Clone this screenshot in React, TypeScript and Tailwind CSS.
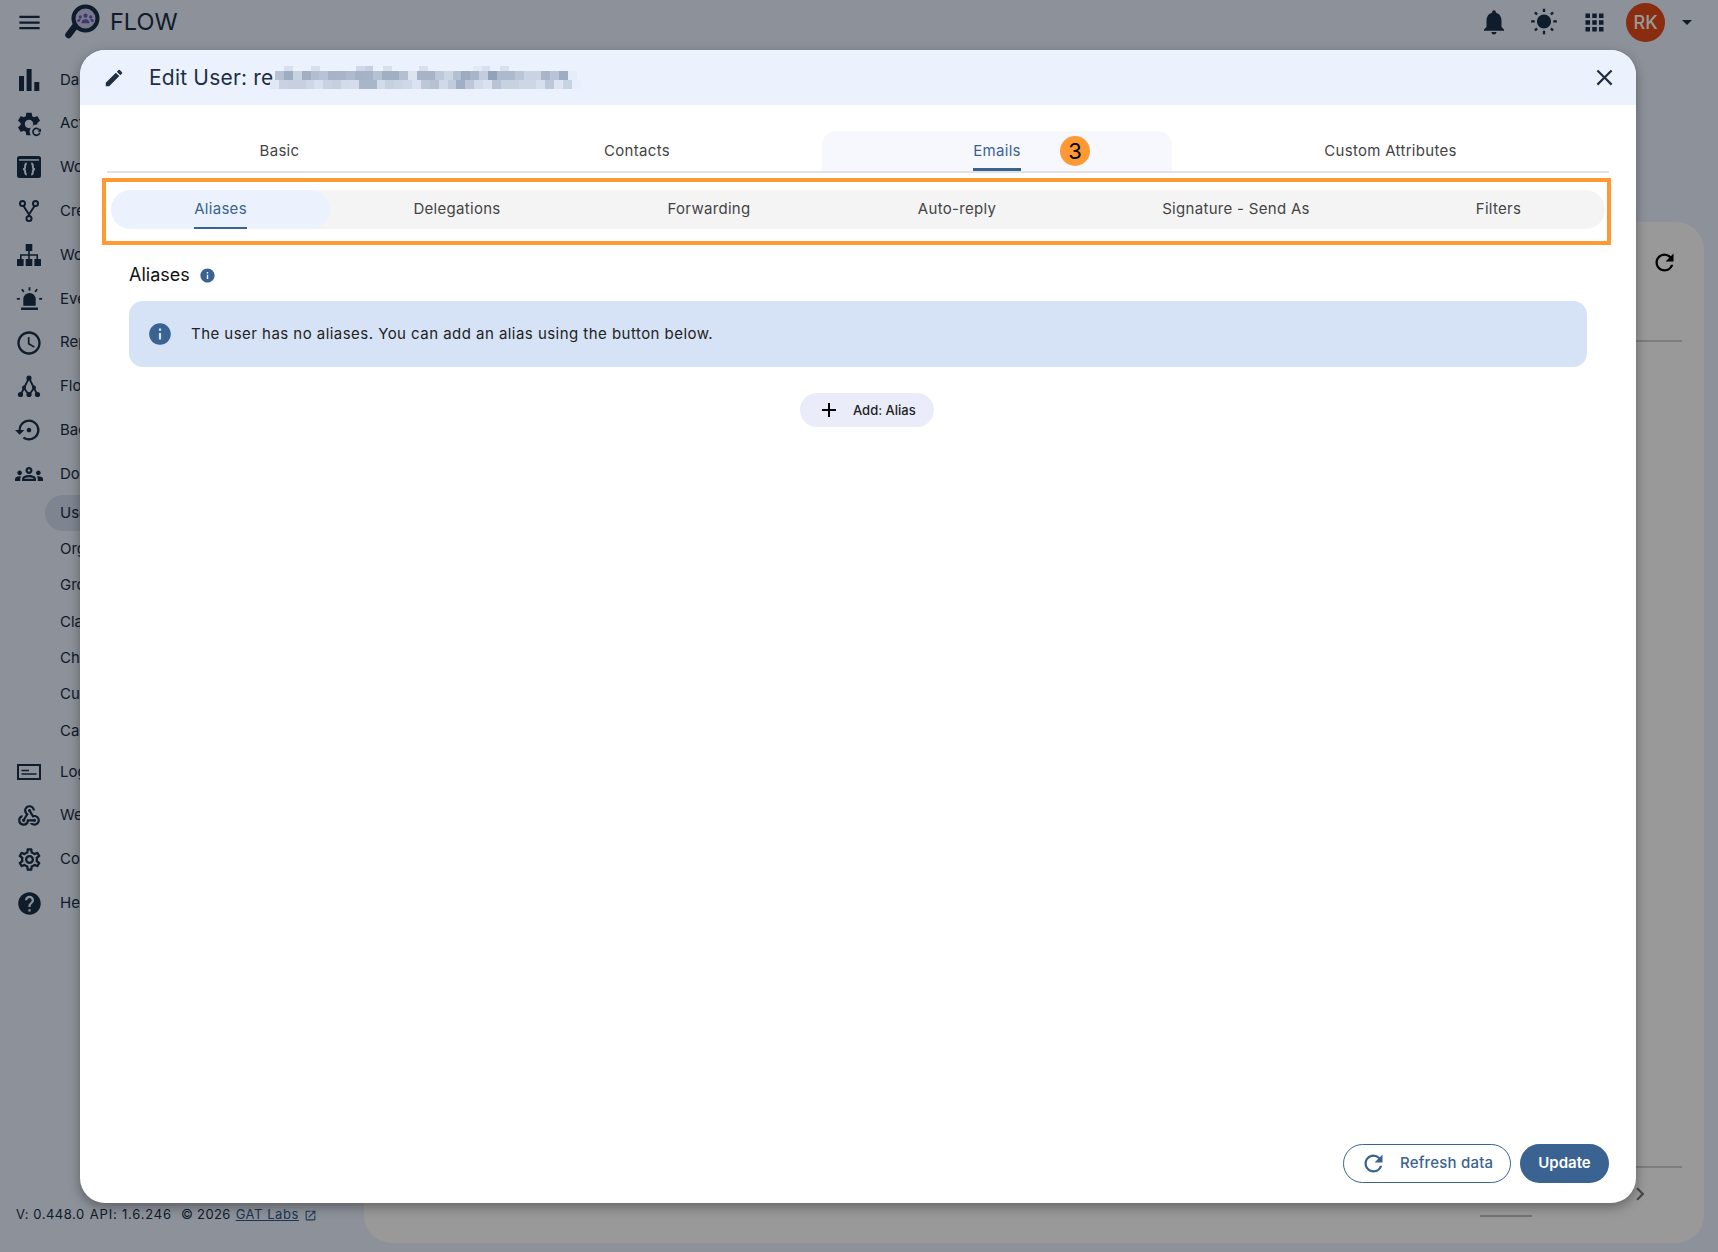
import React from 'react';
import {
  MdAdd,
  MdApps,
  MdArrowDropDown,
  MdChevronRight,
  MdClose,
  MdEdit,
  MdHelp,
  MdInfo,
  MdMenu,
  MdNotifications,
  MdOpenInNew,
  MdOutlineGroups,
  MdOutlineSchedule,
  MdOutlineSettings,
  MdOutlineWebhook,
  MdRefresh,
  MdSettingsBackupRestore,
  MdWbSunny,
} from 'react-icons/md';

// ─── Drawn icons (no close match in the icon packs) ───────────────────────────

const BarsIcon = () => (
  <svg width="24" height="24" viewBox="0 0 24 24" fill="currentColor">
    <rect x="2" y="8" width="5" height="15" />
    <rect x="9.6" y="1" width="5" height="22" />
    <rect x="17.3" y="14" width="5" height="9" />
  </svg>
);

const GEAR =
  'M19.14 12.94c.04-.3.06-.61.06-.94 0-.32-.02-.64-.07-.94l2.03-1.58c.18-.14.23-.41.12-.61l-1.92-3.32c-.12-.22-.37-.29-.59-.22l-2.39.96c-.5-.38-1.03-.7-1.62-.94l-.36-2.54c-.04-.24-.24-.41-.48-.41h-3.84c-.24 0-.43.17-.47.41l-.36 2.54c-.59.24-1.13.57-1.62.94l-2.39-.96c-.22-.08-.47 0-.59.22L2.74 8.87c-.12.21-.08.47.12.61l2.03 1.58c-.05.3-.09.63-.09.94s.02.64.07.94l-2.03 1.58c-.18.14-.23.41-.12.61l1.92 3.32c.12.22.37.29.59.22l2.39-.96c.5.38 1.03.7 1.62.94l.36 2.54c.05.24.24.41.48.41h3.84c.24 0 .44-.17.47-.41l.36-2.54c.59-.24 1.13-.56 1.62-.94l2.39.96c.22.08.47 0 .59-.22l1.92-3.32c.12-.22.07-.47-.12-.61l-2.01-1.58zM12 15.6c-1.98 0-3.6-1.62-3.6-3.6s1.62-3.6 3.6-3.6 3.6 1.62 3.6 3.6-1.62 3.6-3.6 3.6z';

const GearRefreshIcon = () => (
  <svg width="28" height="28" viewBox="0 0 24 24" fill="currentColor">
    <path d={GEAR} />
    <circle cx="18.5" cy="18.5" r="6" fill="#ebf2ff" />
    <path d="M21.2 17.7a3 3 0 1 0 .1 1.7" fill="none" stroke="currentColor" strokeWidth="1.4" />
    <path d="M22.3 15.8v2.8h-2.8z" />
  </svg>
);

const WindowCodeIcon = () => (
  <svg width="24" height="24" viewBox="0 0 24 24">
    <rect x="0" y="1" width="24" height="22" rx="2.5" fill="currentColor" />
    <rect x="2" y="4.2" width="20" height="1.5" fill="#ebf2ff" />
    <path
      d="M9.8 8.5C7.5 8.5 8.3 12 8 13c-.2.8-1 1-1.8 1.2.8.2 1.6.4 1.8 1.2.3 1-.5 4.1 1.8 4.1M14.2 8.5c2.3 0 1.5 3.5 1.8 4.5.2.8 1 1 1.8 1.2-.8.2-1.6.4-1.8 1.2-.3 1 .5 4.1-1.8 4.1"
      fill="none"
      stroke="#ebf2ff"
      strokeWidth="2"
    />
  </svg>
);

const ForkIcon = () => (
  <svg width="24" height="24" viewBox="0 0 24 24" fill="none" stroke="currentColor" strokeWidth="2">
    <circle cx="5.5" cy="4.5" r="2.5" />
    <circle cx="18.5" cy="4.5" r="2.5" />
    <circle cx="12" cy="19.5" r="2.5" />
    <path d="M6.5 7 12 15.5M17.5 7 12 15.5V17" />
  </svg>
);

const SitemapIcon = () => (
  <svg width="24" height="24" viewBox="0 0 24 24" fill="currentColor">
    <rect x="8.7" y="1" width="6.6" height="7" rx="0.5" />
    <rect x="0" y="16" width="6.6" height="7" rx="0.5" />
    <rect x="8.7" y="16" width="6.6" height="7" rx="0.5" />
    <rect x="17.4" y="16" width="6.6" height="7" rx="0.5" />
    <path d="M11.2 8h1.6v3.2H21V16h-1.6v-3.2h-6.6V16h-1.6v-3.2H4.6V16H3v-4.8h8.2z" />
  </svg>
);

const SirenIcon = () => (
  <svg width="27" height="27" viewBox="0 0 24 24" fill="currentColor">
    <path d="M6.5 18.5v-6a5.5 5.5 0 0 1 11 0v6z" />
    <rect x="4.5" y="20" width="15" height="2.2" />
    <rect x="11.2" y="2" width="1.6" height="3" />
    <path d="m4.6 4.3 1.2-1 1.8 2.3-1.2 1zM19.4 4.3l-1.2-1-1.8 2.3 1.2 1z" />
    <rect x="0.8" y="11.5" width="2.6" height="1.6" />
    <rect x="20.6" y="11.5" width="2.6" height="1.6" />
  </svg>
);

const FlowIcon = () => (
  <svg width="24" height="24" viewBox="0 0 24 24" fill="currentColor">
    <path
      d="M12 4 7 14 3.5 21M12 4l5 10 3.5 7M7 14l5 7M17 14l-5 7"
      fill="none"
      stroke="currentColor"
      strokeWidth="1.8"
    />
    <circle cx="12" cy="4" r="2.6" />
    <circle cx="7" cy="13.5" r="2" />
    <circle cx="17" cy="13.5" r="2" />
    <circle cx="3.5" cy="20.5" r="2.6" />
    <circle cx="12" cy="20.5" r="2.6" />
    <circle cx="20.5" cy="20.5" r="2.6" />
  </svg>
);

const LogsIcon = () => (
  <svg width="24" height="24" viewBox="0 0 24 24" fill="none" stroke="currentColor" strokeWidth="2">
    <rect x="1" y="5" width="22" height="14" />
    <path d="M4.5 10.5H12M4.5 14h15" strokeWidth="1.6" />
  </svg>
);

const FlowLogo = () => (
  <svg width="40" height="44" viewBox="0 0 40 44">
    <path d="M13.5 27 7.5 35" stroke="#192f49" strokeWidth="6.5" strokeLinecap="round" />
    <circle cx="24.5" cy="18.5" r="12" fill="#c8cbe8" stroke="#192f49" strokeWidth="4" />
    <g fill="#6a5bbd" transform="translate(24.5 18.5) scale(0.8) translate(-23 -19)">
      <circle cx="23" cy="15.5" r="2.6" />
      <circle cx="16.5" cy="17" r="2" />
      <circle cx="29.5" cy="17" r="2" />
      <path d="M18 25c0-3.6 2-5.2 5-5.2s5 1.6 5 5.2z" />
      <path d="M12.5 23c0-2.4 1.5-3.6 3.8-3.6l1 .4c-1 1-1.4 2-1.5 3.4zM33.5 23c0-2.4-1.5-3.6-3.8-3.6l-1 .4c1 1 1.4 2 1.5 3.4z" />
    </g>
  </svg>
);

// ─── Pixelated part of the address in the dialog title ────────────────────────

const TOP_CELLS: [number, string][] = [
  [18, '#d8e0ef'],
  [45, '#d8e0ef'],
  [90, '#cfd8e8'],
  [98.7, '#c6d0e0'],
  [117, '#d8e0ef'],
  [153, '#d8e0ef'],
  [207, '#e2e9f7'],
  [215.7, '#d8e0ef'],
  [234, '#d8e0ef'],
];
const MIDDLE_ROW = [
  '#b6c2d4', '#9fadc1', '#c8d3e2', '#a2afc3', '#b2bdd0', '#b8c3d6', '#a7b4c8', '#a8b5c9', '#aebacd',
  '#a4b2c6', '#a6b3c7', '#b6c2d3', '#a1afc3', '#a1afc3', '#b4bfd2', '#dce4f2', '#a6b4c6', '#a6b4c6',
  '#bdc8da', '#cbd5e3', '#b4bfd2', '#9dabc0', '#a8b5c9', '#c2cddd', '#93a2b8', '#adb9cc', '#adb9cc',
  '#bac5d7', '#cad3e3', '#cad3e3', '#a9b6ca', '#b9c4d7', '#9fadc2', '#e6edfa',
];
const BOTTOM_ROW = [
  '#dfe6f4', '#c8d2e2', '#c6d0e0', '#c6d0e0', '#cdd7e7', '#d7e0ef', '#c8d2e2', '#c5cfe0', '#d2dbea',
  '#d5dded', '#a9b6c8', '#a9b6c8', '#d2dbea', '#c6d1e0', '#cad4e3', '#cfd8e8', '#dbe3f2', '#bcc7d8',
  '#b6c2d3', '#d0d9e9', '#c0cbdc', '#a1afc4', '#bcc7d9', '#d2dbea', '#dae2f1', '#b8c4d6', '#c7d2e1',
  '#c7d2e1', '#ccd6e5', '#ccd6e5', '#d6dfee', '#bcc7d9', '#dde5f3', '#c8d3e2', '#e8eefb',
];

const Mosaic = () => (
  <svg width="320" height="23" viewBox="0 0 320 23" shapeRendering="crispEdges" className="ml-[-8px] shrink-0">
    {TOP_CELLS.map(([x, c]) => (
      <rect key={x} x={x} y="0" width="8.7" height="5" fill={c} />
    ))}
    {MIDDLE_ROW.map((c, i) => (
      <rect key={i} x={9 + i * 8.88} y="5" width="8.9" height="9" fill={c} />
    ))}
    {BOTTOM_ROW.map((c, i) => (
      <rect key={i} x={4 + i * 8.88} y="14" width="8.9" height="9" fill={c} />
    ))}
  </svg>
);

// ─── Page behind the dialog ───────────────────────────────────────────────────

const TOP_NAV = [
  { icon: <BarsIcon />, label: 'Dashboard' },
  { icon: <GearRefreshIcon />, label: 'Actions' },
  { icon: <WindowCodeIcon />, label: 'Workspace' },
  { icon: <ForkIcon />, label: 'Create' },
  { icon: <SitemapIcon />, label: 'Workflows' },
  { icon: <SirenIcon />, label: 'Events' },
  { icon: <MdOutlineSchedule size={28} />, label: 'Reports' },
  { icon: <FlowIcon />, label: 'Flows' },
  { icon: <MdSettingsBackupRestore size={28} />, label: 'Backups' },
  { icon: <MdOutlineGroups size={28} />, label: 'Domain' },
];
const SUB_NAV = ['Users', 'Org units', 'Groups', 'Classrooms', 'Chrome', 'Custom', 'Calendars'];
const BOTTOM_NAV = [
  { icon: <LogsIcon />, label: 'Logs' },
  { icon: <MdOutlineWebhook size={26} />, label: 'Webhooks' },
  { icon: <MdOutlineSettings size={27} />, label: 'Configuration' },
  { icon: <MdHelp size={27} />, label: 'Help' },
];

const NavRow: React.FC<{ icon: React.ReactNode; label: string }> = ({ icon, label }) => (
  <div className="flex h-[43.8px] items-center">
    <div className="flex w-[58px] shrink-0 justify-center">{icon}</div>
    <span className="ml-[2px] text-[15px]">{label}</span>
  </div>
);

const Sidebar: React.FC = () => (
  <aside className="flex w-[364px] shrink-0 flex-col justify-between pt-[14px] pb-[27px] text-[#192f49]">
    <nav className="w-[240px]">
      {TOP_NAV.map((item) => (
        <NavRow key={item.label} {...item} />
      ))}
      <div className="mt-[-1px] mb-[1px]">
        {SUB_NAV.map((label, i) => (
          <div
            key={label}
            className={
              i === 0
                ? 'ml-[45px] flex h-[36.3px] items-center rounded-l-full bg-[#d4def0] pl-[15px] text-[15px]'
                : 'ml-[45px] flex h-[36.3px] items-center pl-[15px] text-[15px]'
            }
          >
            {label}
          </div>
        ))}
      </div>
      {BOTTOM_NAV.map((item) => (
        <NavRow key={item.label} {...item} />
      ))}
    </nav>
    <div className="flex h-5 items-center pl-4 text-[13px] tracking-[0.55px] text-[#192f49]">
      <span>V: 0.448.0</span>
      <span className="ml-[5px] tracking-[0.8px]">API: 1.6.246</span>
      <span className="ml-[9px] tracking-[0.35px]">© 2026</span>
      <a className="ml-[5px] text-[#2f5a8c] underline">GAT Labs</a>
      <MdOpenInNew size={13} className="ml-[5px] text-[#2f5a8c]" />
    </div>
  </aside>
);

const TopBar: React.FC = () => (
  <header className="flex h-[44px] shrink-0 items-center text-[#192f49]">
    <div className="flex w-[61px] justify-center pr-[3px]">
      <MdMenu size={27} />
    </div>
    <FlowLogo />
    <span className="ml-[9px] text-[23.5px] leading-none">FLOW</span>
    <div className="ml-auto flex items-center pr-[19px]">
      <div className="flex w-[50.5px] justify-center">
        <MdNotifications size={30} />
      </div>
      <div className="flex w-[50.5px] justify-center">
        <MdWbSunny size={28} />
      </div>
      <div className="flex w-[50.5px] justify-center">
        <MdApps size={27} />
      </div>
      <div className="ml-[6px] flex h-[39px] w-[39px] items-center justify-center rounded-full bg-[#e64a19] text-[18px] font-medium text-white">
        RK
      </div>
      <MdArrowDropDown size={24} className="ml-[10px]" />
    </div>
  </header>
);

const BackgroundPanel: React.FC = () => (
  <main className="mt-[178px] mr-[14px] mb-[9px] flex flex-1 flex-col rounded-[28px] bg-white">
    <div className="flex justify-end pt-[27px] pr-[26px]">
      <MdRefresh size={27} className="text-black" />
    </div>
    <div className="mt-[64px] mr-[22px] ml-[36px] h-[2px] bg-[#d0d0d0]" />
    <div className="mt-auto mr-[22px] ml-[36px] h-[2px] bg-[#d0d0d0]" />
    <div className="flex h-[75px] items-start justify-end">
      <div className="mt-[47px] mr-[95px] h-[2px] w-[52px] bg-[#c0c0c0]" />
      <MdChevronRight size={26} className="mt-[13px] mr-[51px] text-[#777]" />
    </div>
  </main>
);

// ─── Dialog ───────────────────────────────────────────────────────────────────

const MAIN_TABS = [
  { label: 'Basic', width: 'w-[345px]' },
  { label: 'Contacts', width: 'w-[370px]' },
  { label: 'Emails', width: 'w-[350px]' },
  { label: 'Custom Attributes', width: 'w-[437px]' },
];

const SUB_TABS = [
  { label: 'Aliases', width: 'w-[219px]' },
  { label: 'Delegations', width: 'w-[254px]' },
  { label: 'Forwarding', width: 'w-[250px]' },
  { label: 'Auto-reply', width: 'w-[246px]' },
  { label: 'Signature - Send As', width: 'w-[312px]' },
  { label: 'Filters', width: 'w-[213px]' },
];

const EditUserDialog: React.FC = () => (
  <div className="absolute top-[50px] left-[80px] flex h-[1153px] w-[1556px] flex-col overflow-hidden rounded-[25px] bg-white font-['Inter',sans-serif] shadow-[0_4px_12px_rgba(0,0,0,0.35)]">
    {/* Header */}
    <div className="flex h-[55px] shrink-0 items-center bg-[#ebf2fe] text-[#1e2f45]">
      <MdEdit size={22} className="ml-[23px]" />
      <span className="ml-[24px] text-[21px] leading-none tracking-[0.2px] whitespace-nowrap">Edit User: re</span>
      <Mosaic />
      <MdClose size={27} className="mr-[18.5px] ml-auto" />
    </div>

    {/* Main tabs */}
    <div className="mt-[26px] ml-[27px] flex w-[1502px] border-b-2 border-[#e2e2e2] tracking-[0.3px]">
      {MAIN_TABS.map((tab) => (
        <div
          key={tab.label}
          className={
            tab.label === 'Emails'
              ? `relative flex h-[40px] ${tab.width} items-center justify-center rounded-t-[14px] bg-[#f6f8fe] text-[15px] text-[#3a6391]`
              : `flex h-[40px] ${tab.width} items-center justify-center text-[15px] text-[#444]`
          }
        >
          {tab.label === 'Emails' ? (
            <span className="relative flex h-full items-center border-b-[3px] border-[#3a6391] pt-[3px]">
              Emails
              <span className="absolute top-[5px] left-[87px] flex h-[30px] w-[30px] items-center justify-center rounded-full bg-[#ff9933] text-[22px] text-black">
                3
              </span>
            </span>
          ) : (
            tab.label
          )}
        </div>
      ))}
    </div>

    {/* Sub tabs, highlighted with the orange frame */}
    <div className="mt-[5px] ml-[22px] h-[67px] w-[1509px] border-4 border-[#ff9933] pt-[8px] pl-[5px] tracking-[0.3px]">
      <div className="flex h-[39px] w-[1494px] rounded-full bg-[#f4f4f4]">
        {SUB_TABS.map((tab) => (
          <div
            key={tab.label}
            className={
              tab.label === 'Aliases'
                ? `flex h-full ${tab.width} items-center justify-center rounded-full bg-[#ebf2fe] text-[15px] text-[#3a6391]`
                : `flex h-full ${tab.width} items-center justify-center text-[15px] text-[#444]`
            }
          >
            {tab.label === 'Aliases' ? (
              <span className="flex h-full items-center border-b-2 border-[#3a6391] pt-[1px]">Aliases</span>
            ) : (
              tab.label
            )}
          </div>
        ))}
      </div>
    </div>

    {/* Aliases section */}
    <div className="mt-[15px] mb-[1px] ml-[49px] flex h-[28px] items-center text-[18px] text-[#111]">
      Aliases
      <MdInfo size={17} className="mt-[3px] ml-[9px] text-[#3a6391]" />
    </div>
    <div className="mt-[12px] ml-[49px] flex h-[66px] w-[1458px] items-center rounded-[14px] bg-[#d6e3f6] text-[15px] tracking-[0.46px] text-[#222]">
      <MdInfo size={26} className="ml-[18px] text-[#3a6391]" />
      <span className="ml-[18px]">The user has no aliases. You can add an alias using the button below.</span>
    </div>
    <div className="mt-[26px] ml-[720px] flex h-[34px] w-[134px] items-center rounded-full bg-[#eaecf9] text-[13px] font-medium text-[#222]">
      <MdAdd size={24} className="ml-[17px] text-black" />
      <span className="ml-[12px] pt-[1px]">Add: Alias</span>
    </div>

    {/* Footer */}
    <div className="mt-auto flex justify-end gap-[9px] pr-[27px] pb-[20px]">
      <div className="flex h-[39px] w-[168px] items-center rounded-full border border-[#3a6391] text-[15px] font-medium tracking-[0.2px] text-[#3a6391]">
        <MdRefresh size={27} className="ml-[16px]" />
        <span className="ml-[13px]">Refresh data</span>
      </div>
      <div className="flex h-[39px] w-[89px] items-center justify-center rounded-full bg-[#3a6391] text-[15px] font-semibold text-white">
        Update
      </div>
    </div>
  </div>
);

export default function App() {
  return (
    <div className="relative flex h-screen w-screen flex-col overflow-hidden bg-[#ebf2ff] font-['Inter',sans-serif]">
      <TopBar />
      <div className="flex flex-1">
        <Sidebar />
        <BackgroundPanel />
      </div>
      {/* Modal backdrop */}
      <div className="absolute inset-0 bg-black/40" />
      <EditUserDialog />
    </div>
  );
}
